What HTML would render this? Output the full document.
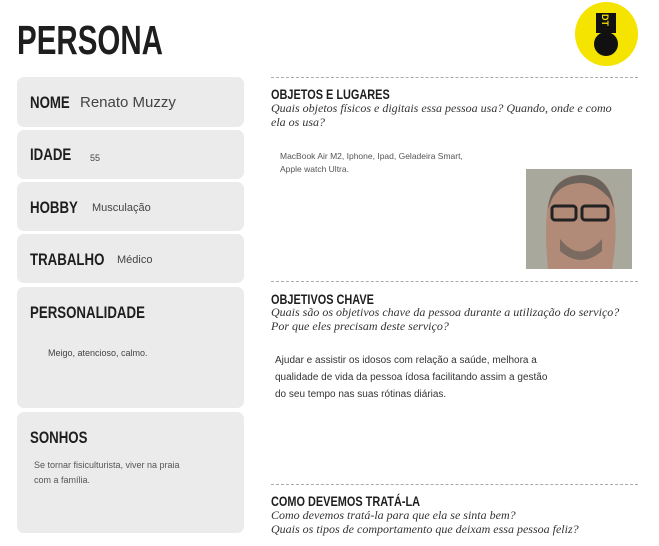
<!DOCTYPE html>
<html><head><meta charset="utf-8"><style>
body{margin:0;width:659px;height:546px;background:#fff;position:relative;overflow:hidden;font-family:"Liberation Sans",sans-serif;color:#222}
.a{position:absolute}
.card{position:absolute;left:17px;width:227px;background:#ebebeb;border-radius:7px}
.h{font-weight:bold;transform:scaleX(0.78);transform-origin:left top;white-space:nowrap;color:#1e1e1e;position:absolute}
.v{position:absolute;color:#444;white-space:nowrap}
.dash{position:absolute;left:271px;width:367px;border-top:1px dashed #aaa}
.q{position:absolute;left:271px;font-family:"Liberation Serif",serif;font-style:italic;font-size:12px;line-height:14px;color:#333}
.s{position:absolute;font-size:9px;color:#555;line-height:15px}
</style></head><body>
<div class="h" style="left:17px;top:17px;font-size:41px;transform:scaleX(0.72)">PERSONA</div>
<div class="a" style="left:575px;top:2px;width:63px;height:64px;border-radius:50%;background:#f5e400"></div>
<div class="a" style="left:596px;top:13px;width:20px;height:20px;background:#111"></div>
<div class="a" style="left:594px;top:32px;width:24px;height:24px;border-radius:50%;background:#111"></div>
<div class="a" style="left:599px;top:15px;font-size:9px;color:#f5e400;font-weight:bold;transform:rotate(90deg)">DT</div>

<div class="card" style="top:77px;height:50px"></div>
<div class="h" style="left:30px;top:93px;font-size:17px">NOME</div>
<div class="v" style="left:80px;top:94px;font-size:15px">Renato Muzzy</div>
<div class="card" style="top:130px;height:49px"></div>
<div class="h" style="left:30px;top:145px;font-size:17px">IDADE</div>
<div class="v" style="left:90px;top:153px;font-size:9px">55</div>
<div class="card" style="top:182px;height:49px"></div>
<div class="h" style="left:30px;top:198px;font-size:17px">HOBBY</div>
<div class="v" style="left:92px;top:202px;font-size:11px">Musculação</div>
<div class="card" style="top:234px;height:49px"></div>
<div class="h" style="left:30px;top:250px;font-size:17px">TRABALHO</div>
<div class="v" style="left:117px;top:254px;font-size:11px">Médico</div>
<div class="card" style="top:287px;height:121px"></div>
<div class="h" style="left:30px;top:303px;font-size:17px">PERSONALIDADE</div>
<div class="v" style="left:48px;top:348px;font-size:9px">Meigo, atencioso, calmo.</div>
<div class="card" style="top:412px;height:121px"></div>
<div class="h" style="left:30px;top:428px;font-size:17px">SONHOS</div>
<div class="s" style="left:34px;top:458px;width:200px">Se tornar fisiculturista, viver na praia<br>com a família.</div>

<div class="dash" style="top:77px"></div>
<div class="h" style="left:271px;top:86px;font-size:14px">OBJETOS E LUGARES</div>
<div class="q" style="top:101px;width:360px">Quais objetos físicos e digitais essa pessoa usa? Quando, onde e como<br>ela os usa?</div>
<div class="s" style="left:280px;top:150px;font-size:8.5px;line-height:13px">MacBook Air M2, Iphone, Ipad, Geladeira Smart,<br>Apple watch Ultra.</div>
<svg class="a" style="left:526px;top:169px" width="106" height="100" viewBox="0 0 106 100">
<rect width="106" height="100" fill="#a8a89c"/>
<path d="M22 100 Q18 60 22 35 Q30 5 55 6 Q82 6 88 35 Q92 65 86 100Z" fill="#b28a78"/>
<path d="M22 40 Q25 8 55 6 Q84 6 88 40 L84 30 Q70 14 55 14 Q35 14 26 30Z" fill="#6b625c"/>
<rect x="26" y="37" width="24" height="14" rx="3" fill="none" stroke="#222" stroke-width="3"/>
<rect x="56" y="37" width="26" height="14" rx="3" fill="none" stroke="#222" stroke-width="3"/>
<path d="M34 70 Q54 95 76 70 L76 82 Q55 100 34 82Z" fill="#7a6a60"/>
</svg>

<div class="dash" style="top:281px"></div>
<div class="h" style="left:271px;top:291px;font-size:14px">OBJETIVOS CHAVE</div>
<div class="q" style="top:305px;width:370px">Quais são os objetivos chave da pessoa durante a utilização do serviço?<br>Por que eles precisam deste serviço?</div>
<div class="s" style="left:275px;top:352px;font-size:10px;line-height:17px;color:#333">Ajudar e assistir os idosos com relação a saúde, melhora a<br>qualidade de vida da pessoa ídosa facilitando assim a gestão<br>do seu tempo nas suas rótinas diárias.</div>

<div class="dash" style="top:484px"></div>
<div class="h" style="left:271px;top:493px;font-size:14px">COMO DEVEMOS TRATÁ-LA</div>
<div class="q" style="top:508px;width:370px">Como devemos tratá-la para que ela se sinta bem?<br>Quais os tipos de comportamento que deixam essa pessoa feliz?</div>
</body></html>
